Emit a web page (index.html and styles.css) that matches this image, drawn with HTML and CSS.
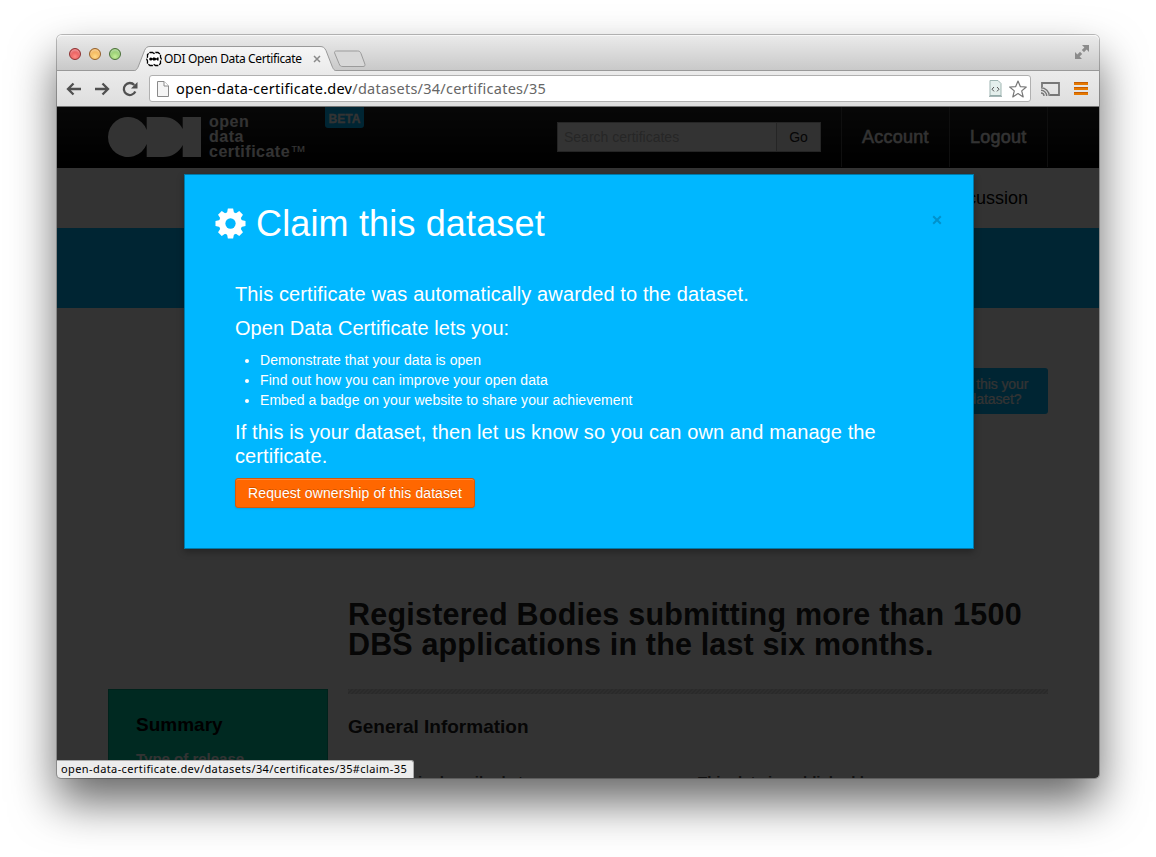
FILE: index.html
```html
<!DOCTYPE html>
<html lang="en">
<head>
<meta charset="utf-8">
<title>ODI Open Data Certificate</title>
<link rel="stylesheet" href="styles.css">
</head>
<body>
<div class="window">
  <header class="tabstrip">
    <div class="lights"><i class="light red"></i><i class="light amber"></i><i class="light green"></i></div>
    <div class="tab">
      <svg class="tab-shape" width="210" height="26" viewBox="0 0 210 26">
        <defs><linearGradient id="tabfill" x1="0" y1="0" x2="0" y2="1"><stop offset="0" stop-color="#f6f6f6"/><stop offset="1" stop-color="#ebebeb"/></linearGradient></defs>
        <path d="M-3 25.500C2 25.500 4 24 5.500 20L11.500 4.500C13 1.500 14 .5 17 .5H187C190 .5 191.500 1.500 193 4.500L199 20C200.500 24 202 25.500 207 25.500V26H0Z" fill="url(#tabfill)"/>
        <path d="M-3 25.500C2 25.500 4 24 5.500 20L11.500 4.500C13 1.500 14 .5 17 .5H187C190 .5 191.500 1.500 193 4.500L199 20C200.500 24 202 25.500 207 25.500" fill="none" stroke="#999"/>
      </svg>
      <div class="tab-content">
        <svg class="favicon" width="16" height="16" viewBox="0 0 16 16">
          <path d="M4 1.500H6.500L8 2.500 9.500 1.500H12L14.500 3.500V6L15.300 8 14.500 10V12.500L12 14.500H9.500L8 13.500 6.500 14.500H4L1.500 12.500V10L.7 8 1.500 6V3.500Z" fill="#fff" stroke="#000" stroke-width="1.300" stroke-dasharray="5 1"/>
          <circle cx="4.800" cy="8" r="1.600" fill="#000"/><path d="M7 6.400H8.500A1.600 1.600 0 0 1 8.500 9.600H7ZM11 6.400H12.600V9.600H11ZM5 7.300H12V8.700H5Z" fill="#000"/>
        </svg>
        <span class="tab-title">ODI Open Data Certificate</span>
        <svg class="tab-close" width="8" height="8" viewBox="0 0 8 8"><path d="M1 1L7 7M7 1L1 7" stroke="#8a8a8a" stroke-width="1.500"/></svg>
      </div>
    </div>
    <svg class="newtab" width="34" height="18" viewBox="0 0 34 18"><path d="M3.500 1H24.500C26.500 1 27 1.500 28 3.500L31.500 13C32.500 15.500 32 16.500 30 16.500H10C7.500 16.500 7 16 6 13.500L2 4C1 2 1.500 1 3.500 1Z" fill="#d8d8d8" stroke="#9b9b9b"/></svg>
    <svg class="expand" width="16" height="16" viewBox="0 0 16 16"><path d="M8 1H15V8L12.600 5.600 10 8.200 7.800 6 10.400 3.400ZM1 8L3.400 10.400 6 7.800 8.200 10 5.600 12.600 8 15H1Z" fill="#8b8b8b"/></svg>
  </header>

  <div class="toolbar">
    <svg width="16" height="16" viewBox="0 0 16 16"><path d="M7.500 2.500L2 8 7.500 13.500M2.500 8H15" fill="none" stroke="#505050" stroke-width="2.300"/></svg>
    <svg width="16" height="16" viewBox="0 0 16 16"><path d="M8.500 2.500L14 8 8.500 13.500M13.500 8H1" fill="none" stroke="#505050" stroke-width="2.300"/></svg>
    <svg width="16" height="16" viewBox="0 0 16 16"><path d="M13.300 10.500A6 6 0 1 1 12.300 4" fill="none" stroke="#505050" stroke-width="2.300"/><path d="M15.500 1V7.500H9Z" fill="#505050"/></svg>
    <div class="omnibox">
      <svg width="12" height="16" viewBox="0 0 12 16"><path d="M.5.500H7L11.500 5V15.500H.5Z" fill="#f5f5f5" stroke="#8a8a8a"/><path d="M7 .5V5H11.500" fill="#fff" stroke="#8a8a8a"/></svg>
      <span class="url">open-data-certificate.dev<span class="path">/datasets/34/certificates/35</span></span>
      <svg class="code" width="13" height="17" viewBox="0 0 13 17"><path d="M1 .5H9L12 3.500V15.500H1Z" fill="#e4efec" stroke="#9fb5b2"/><path d="M0 16.200H13" stroke="#7d9694"/><path d="M5 7L3 9.200 5 11.400M8 7L10 9.200 8 11.400" fill="none" stroke="#555"/></svg>
      <svg class="star" width="18" height="18" viewBox="0 0 18 18"><path d="M9 1L11.300 6.600 17.300 7 12.700 10.900 14.200 16.900 9 13.600 3.800 16.900 5.300 10.900.7 7 6.700 6.600Z" fill="#fff" stroke="#777" stroke-width="1.200" stroke-linejoin="round"/></svg>
    </div>
    <svg class="cast" width="20" height="16" viewBox="0 0 20 16"><path d="M2 6V2H19V14H10" fill="none" stroke="#777" stroke-width="1.800"/><path d="M1 12A3 3 0 0 1 4 15M1 9.300A5.700 5.700 0 0 1 6.700 15M1 6.700A8.300 8.300 0 0 1 9.300 15" fill="none" stroke="#777" stroke-width="1.400"/></svg>
    <div class="menu"><i></i><i></i><i></i></div>
  </div>

  <main class="page">
    <div class="site-header">
      <div class="container header-row">
        <svg class="logo" width="93" height="40" viewBox="0 0 93 40"><path d="M38.700 0H55C64 0 71 4.500 74.700 12V0H93V40H74.700V28C71 35.500 64 40 55 40H38.700V27.100A20 20 0 1 1 38.700 12.900Z" fill="#fff"/></svg>
        <div class="brand">open<br>data<br>certificate<span class="tm">™</span></div>
        <span class="beta">BETA</span>
        <div class="search"><span class="field">Search certificates</span><span class="go">Go</span></div>
        <nav class="account"><a class="acc">Account</a><a class="out">Logout</a></nav>
      </div>
    </div>
    <div class="subnav container"><a>Discussion</a></div>
    <div class="band"></div>
    <div class="container claim-row"><a class="claim">Is this your<br>dataset?</a></div>
    <div class="container content">
      <h1><span class="h1a">Registered Bodies submitting more than 1500</span><br>DBS applications in the last six months.</h1>
      <aside class="summary"><h2>Summary</h2><p>Type of release</p></aside>
      <section class="info">
        <div class="stripes"></div>
        <h2>General Information</h2>
        <div class="columns"><p>This data is described at</p><p>This data is published by</p></div>
      </section>
    </div>

    <div class="backdrop"></div>
    <div class="modal">
      <div class="modal-head">
        <svg class="gear" width="31" height="31" viewBox="-16 -16 32 32">
          <g fill="#fff"><circle r="12"/>
          <path id="t" d="M-3.600-11L-2.700-15.500H2.700L3.600-11V11L2.700 15.500H-2.700L-3.600 11Z"/>
          <use href="#t" transform="rotate(45)"/><use href="#t" transform="rotate(90)"/><use href="#t" transform="rotate(135)"/></g>
          <circle r="5.300" fill="#00b7ff"/>
        </svg>
        <span class="modal-title">Claim this dataset</span>
        <svg class="modal-close" width="10" height="10" viewBox="0 0 10 10"><path d="M1.200 1.200L8.800 8.800M8.800 1.200L1.200 8.800" stroke="#0092cc" stroke-width="2"/></svg>
      </div>
      <div class="modal-body">
        <p class="lead l1">This certificate was automatically awarded to the dataset.</p>
        <p class="lead l2">Open Data Certificate lets you:</p>
        <ul>
          <li>Demonstrate that your data is open</li>
          <li class="i2">Find out how you can improve your open data</li>
          <li class="i3">Embed a badge on your website to share your achievement</li>
        </ul>
        <p class="lead l3">If this is your dataset, then let us know so you can own and manage the<br>certificate.</p>
        <a class="request">Request ownership of this dataset</a>
      </div>
    </div>
    <div class="status">open-data-certificate.dev/datasets/34/certificates/35#claim-35</div>
  </main>
</div>
</body>
</html>
```
FILE: styles.css
```css
* { box-sizing: border-box; }
body { margin: 0; padding: 35px 57px; height: 857px; overflow: hidden; background: #fff; font-family: "Liberation Sans", Arial, sans-serif; }
h1, h2, p, ul { margin: 0; padding: 0; }
svg { display: block; flex: none; }
i { display: block; }

.window { width: 1042px; height: 743px; border-radius: 5px 5px 4px 4px; box-shadow: 0 0 0 1px rgba(0,0,0,.25), 0 24px 46px rgba(0,0,0,.6); display: flex; flex-direction: column; }

.tabstrip { height: 36px; flex: none; display: flex; background: linear-gradient(#ebebeb, #c9c9c9); border-bottom: 1px solid #999; border-radius: 5px 5px 0 0; box-shadow: inset 0 1px #f8f8f8; }
.lights { display: flex; gap: 8px; padding: 13px 0 0 12px; width: 76px; }
.light { width: 12px; height: 12px; border-radius: 50%; border: 1px solid; box-shadow: inset 0 2px 2px rgba(255,255,255,.4); }
.red { background: radial-gradient(circle at 50% 75%, #ff8a84, #d5343a); border-color: #8e3030; }
.amber { background: radial-gradient(circle at 50% 75%, #ffd98a, #e9982e); border-color: #95602a; }
.green { background: radial-gradient(circle at 50% 75%, #c5ee9a, #6bb04a); border-color: #4a7038; }
.tab { display: grid; width: 207px; height: 26px; margin-top: 11px; }
.tab-shape, .tab-content { grid-area: 1 / 1; }
.tab-shape { overflow: visible; }
.tab-content { display: flex; align-items: center; padding-left: 13px; height: 26px; }
.favicon { margin-top: -1px; }
.tab-title { width: 151px; padding: 0 0 1px 2px; font: 12px "Noto Sans", sans-serif; color: #000; white-space: nowrap; letter-spacing: -.36px; }
.newtab { margin: 15px 0 0 -7px; }
.expand { margin: 9px 9px 0 auto; }

.toolbar { height: 36px; flex: none; display: flex; align-items: center; padding: 0 10px 0 9px; gap: 12px; background: linear-gradient(#ebebeb, #dedede); border-bottom: 1px solid #747474; }
.omnibox { width: 882px; height: 27px; margin-left: -1px; display: flex; align-items: center; padding: 0 3px 0 7px; background: #fff; border: 1px solid #b0b0b0; border-radius: 3px; }
.url { flex: 1; padding: 0 0 2px 7px; font: 14.500px "Noto Sans", sans-serif; white-space: nowrap; color: #000; letter-spacing: .25px; }
.path { color: #666; }
.star { margin-left: 7px; }
.cast { margin-left: -3px; }
.menu { display: grid; gap: 2px; width: 14px; margin-left: 2px; }
.menu i { height: 3px; background: #e57800; border-top: 1px solid #c65c00; }

.page { position: relative; flex: 1; overflow: hidden; background: #fff; border-radius: 0 0 4px 4px; }
.container { width: 940px; margin: 0 auto; }
.site-header { height: 61px; background: linear-gradient(#262626, #000); }
.header-row { display: flex; align-items: flex-start; height: 61px; }
.logo { margin-top: 10px; }
.brand { width: 109px; padding: 7px 0 0 8px; font-weight: bold; font-size: 16px; line-height: 15px; color: #fff; letter-spacing: .5px; white-space: nowrap; }
.tm { font-weight: normal; }
.beta { margin-left: 15px; width: 39px; height: 21px; background: #00b7ff; border-radius: 0 0 3px 3px; color: #fff; font-weight: bold; font-size: 12px; line-height: 24px; text-align: center; -webkit-text-stroke: .3px; }
.search { display: flex; margin: 15px 0 0 193px; width: 264px; height: 30px; font-size: 14px; line-height: 28px; border: 1px solid #bbb; background: #fff; }
.field { flex: 1; padding-left: 6px; color: #bdbdbd; }
.go { width: 44px; border-left: 1px solid #bbb; background: #f2f2f2; color: #222; text-align: center; }
.account { display: flex; margin-left: 20px; height: 60px; line-height: 60px; font-size: 18px; color: #fff; letter-spacing: .25px; }
.account a { width: 108px; padding-left: 20px; border-left: 1px solid #4a4a4a; -webkit-text-stroke: .5px; }
.account .out { width: 99px; border-right: 1px solid #4a4a4a; }
.subnav { height: 60px; line-height: 60px; text-align: right; padding-right: 20px; font-size: 18px; color: #000; }
.band { height: 80px; background: #00b7ff; }
.claim-row { display: flex; justify-content: flex-end; padding-top: 60px; height: 291px; }
.claim { width: 106px; height: 46px; padding-top: 9px; background: #00b7ff; border-radius: 3px; color: #fff; font-size: 14px; line-height: 15px; text-align: center; letter-spacing: -.1px; -webkit-text-stroke: .2px; }
.content { display: grid; grid-template-columns: 220px 700px; column-gap: 20px; grid-template-rows: 90px auto; }
h1 { grid-column: 2; font-size: 30.500px; line-height: 30px; color: #222; white-space: nowrap; letter-spacing: .15px; }
.h1a { letter-spacing: .22px; }
.summary { height: 300px; padding: 25px 27px; background: #00cba3; border: 1px solid #00a887; }
.summary h2 { font-size: 19px; line-height: 20px; color: #000; }
.summary p { margin-top: 14px; font-size: 15px; line-height: 20px; font-weight: bold; color: #fff; white-space: nowrap; }
.stripes { height: 5px; background: repeating-linear-gradient(135deg, #d2d2d2 0 1.400px, #e6e6e6 1.400px 2.828px); }
.info h2 { margin-top: 23px; font-size: 19px; line-height: 20px; color: #222; }
.columns { display: grid; grid-template-columns: 350px 350px; margin-top: 35px; font-size: 15px; font-weight: bold; line-height: 20px; color: #555; }

.backdrop { position: absolute; inset: 0; background: rgba(0,0,0,.8); }
.modal { position: absolute; left: 127px; top: 67px; width: 790px; height: 375px; background: #00b7ff; border: 1px solid #0079a9; box-shadow: 0 3px 7px rgba(0,0,0,.3); color: #fff; }
.modal-head { display: flex; align-items: center; height: 98px; padding: 0 31px 0 30px; }
.gear { margin-top: -2px; }
.modal-title { flex: 1; padding-left: 10px; font-size: 36px; white-space: nowrap; letter-spacing: .15px; }
.modal-close { margin-top: -8px; }
.modal-body { padding: 9px 50px; }
.lead { font-size: 20px; line-height: 24px; white-space: nowrap; letter-spacing: .1px; }
.l1 { letter-spacing: .12px; }
.l2 { margin-top: 10px; letter-spacing: .06px; }
ul { margin: 10px 0 10px; padding-left: 25px; font-size: 14px; line-height: 20px; letter-spacing: .07px; }
.i2 { letter-spacing: .09px; }
.i3 { letter-spacing: .05px; }
.request { display: block; margin-top: 10px; width: 240px; height: 30px; border: 1px solid #d55a08; border-radius: 3px; background: #ff6700; box-shadow: inset 0 1px #ff8534, 0 1px 2px rgba(0,0,0,.1); font-size: 14px; line-height: 28px; letter-spacing: .09px; text-align: center; text-shadow: 0 -1px rgba(0,0,0,.2); white-space: nowrap; }

.status { position: absolute; left: 0; bottom: 0; width: 357px; height: 18px; padding-left: 4px; background: #ececec; border: solid #aaa; border-width: 1px 1px 0 0; border-radius: 0 3px 0 3px; font: 11px/16px "Noto Sans", sans-serif; color: #000; white-space: nowrap; letter-spacing: .4px; }
```
